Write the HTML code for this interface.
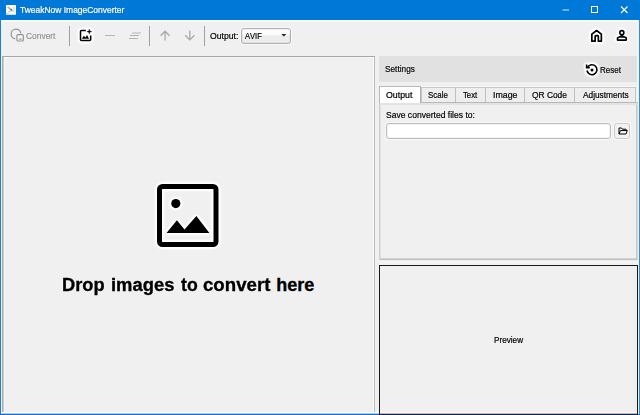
<!DOCTYPE html>
<html><head><meta charset="utf-8">
<style>
html,body{margin:0;padding:0;}
body{width:640px;height:415px;overflow:hidden;background:#f0f0f0;position:relative;font-family:"Liberation Sans",sans-serif;font-size:9px;color:#000;}
.a{position:absolute;}
.t{position:absolute;white-space:nowrap;line-height:12px;transform-origin:0 0;-webkit-text-stroke:0.22px currentColor;text-shadow:0 0 1px rgba(255,255,255,0.900),0 0 1px rgba(255,255,255,0.700);}
.h{filter:drop-shadow(0 0 0.8px #fff) drop-shadow(0 0 0.8px #fff) drop-shadow(0 0 0.8px #fff) drop-shadow(0 0 0.6px #fff);}
.sep{position:absolute;width:1px;background:#a0a0a0;top:26px;height:20px;}
</style></head><body>
<div class="a" style="left:0;top:0;width:640px;height:20px;background:#0078d7;"></div>
<div class="a" style="left:1px;top:20px;width:638px;height:1px;background:#fffdf5;"></div>
<div class="a" style="left:1px;top:21px;width:638px;height:1px;background:#f8f7f2;"></div>
<div class="a" style="left:0;top:20px;width:1px;height:395px;background:#1a80d9;"></div>
<div class="a" style="left:637px;top:22px;width:1px;height:391px;background:#f7f6f2;"></div>
<div class="a" style="left:638px;top:20px;width:1px;height:394px;background:#f1f1e8;"></div>
<div class="a" style="left:639px;top:20px;width:1px;height:395px;background:#2f8ee0;"></div>
<div class="a" style="left:1px;top:412px;width:637px;height:1px;background:#fffdf5;"></div>
<div class="a" style="left:1px;top:413px;width:637px;height:1px;background:#a9cdee;"></div>
<div class="a" style="left:0;top:414px;width:640px;height:1px;background:#0f6fc8;"></div>

<!-- title icon -->
<svg class="a" style="left:5px;top:4px" width="12" height="12" viewBox="0 0 12 12">
<defs><filter id="b1" x="-50%" y="-50%" width="200%" height="200%"><feGaussianBlur stdDeviation="0.600"/></filter></defs>
<rect x="1" y="1" width="10" height="9.600" fill="#fdfdfd"/>
<rect x="1" y="10" width="10" height="0.600" fill="#d8eaf8"/>
<g filter="url(#b1)">
<rect x="7.800" y="2.600" width="2.600" height="6" fill="#e6e6e6"/>
<path d="M2.800 2.800 L7.500 7.200" stroke="#b4b4b4" stroke-width="1.600" fill="none"/>
<path d="M5.600 5 L7 6.200" stroke="#707070" stroke-width="1.400" fill="none"/>
<path d="M3.400 8 L5.400 7.300" stroke="#a0a0a0" stroke-width="1" fill="none"/>
<rect x="1.200" y="1.100" width="1.600" height="0.900" fill="#ffd980"/>
<rect x="8.600" y="1.100" width="1.800" height="0.900" fill="#ffe090"/>
<rect x="1.400" y="9" width="2.200" height="0.800" fill="#f7b040"/>
</g>
</svg>
<div class="t" style="left:19.99px;top:4px;font-size:9.5px;color:#fff;font-weight:normal;line-height:12px;transform:scaleX(0.8906);text-shadow:0 0 1px rgba(0,80,170,0.600);">TweakNow ImageConverter</div>
<!-- window controls -->
<svg class="a" style="left:555px;top:0" width="85" height="20" viewBox="0 0 85 20">
<path d="M7.500 10 H14" stroke="#fff" stroke-width="1" stroke-opacity="0.850" fill="none"/>
<rect x="36.500" y="6.500" width="6" height="6" stroke="#fff" stroke-width="1" fill="none"/>
<path d="M66 6.500 L72.500 13 M72.500 6.500 L66 13" stroke="#fff" stroke-width="1.100" fill="none"/>
</svg>

<!-- toolbar -->
<svg class="a" style="left:9px;top:27.400px;filter:drop-shadow(0 0 0.6px #fff) drop-shadow(0 0 0.5px #fff);" width="18" height="18" viewBox="0 0 18 18" fill="none" stroke="#8e8e8e" stroke-width="1.200">
<path d="M6.300 11.850 A4.900 4.900 0 1 1 11.850 6.300"/>
<rect x="7.900" y="7.700" width="6.400" height="6.300" rx="1" fill="#f8f8f8"/>
<path d="M9.800 12.300 H12.600 M11.200 11.500 L11.800 11 L12.200 11.500" stroke-width="0.800"/>
</svg>
<div class="t" style="left:26.15px;top:30px;font-size:9px;color:#909090;font-weight:normal;line-height:12px;transform:scaleX(0.9349);">Convert</div>
<div class="sep" style="left:69px"></div>
<svg class="a h" style="left:78px;top:28px" width="16" height="16" viewBox="0 0 16 16" fill="none" stroke="#000" stroke-width="1.500">
<rect x="2.500" y="2.500" width="10.200" height="10.100" rx="1.300" fill="#fff" stroke="none"/>
<path d="M7.900 2.550 H3.500 Q2.500 2.550 2.500 3.550 V11.600 Q2.500 12.600 3.500 12.600 H11.700 Q12.700 12.600 12.700 11.600 V7.500"/>
<path d="M3.800 10.800 L5.900 7.700 L7.400 9.400 L9 7.100 L11.100 10.800 Z" fill="#000" stroke="none"/>
<path d="M11.300 1 L11.900 3 L13.900 3.600 L11.900 4.200 L11.300 6.200 L10.700 4.200 L8.700 3.600 L10.700 3 Z" fill="#000" stroke="#000" stroke-width="0.300"/>
</svg>
<div class="a" style="left:105px;top:35px;width:10px;height:1px;background:#b4b4b4;"></div>
<div class="a" style="left:132px;top:32px;width:9px;height:1px;background:#b4b4b4;transform:translateY(0.500px);"></div>
<div class="a" style="left:130px;top:35px;width:9px;height:1px;background:#b0b0b0;"></div>
<div class="a" style="left:129px;top:38px;width:9px;height:1px;background:#b4b4b4;"></div>
<div class="sep" style="left:149px"></div>
<svg class="a" style="left:158px;top:28px" width="40" height="16" viewBox="0 0 40 16" fill="none" stroke="#a8a8a8" stroke-width="1.250">
<path d="M7.100 12.600 V3 M2.600 7.800 L7.100 3.200 L11.600 7.800"/>
<path d="M31.800 2.500 V12 M27.200 7.300 L31.800 11.900 L36.400 7.300"/>
</svg>
<div class="sep" style="left:204px"></div>
<div class="t" style="left:209.84px;top:30px;font-size:9px;color:#000;font-weight:normal;line-height:12px;transform:scaleX(0.9579);">Output:</div>
<div class="a" style="left:241px;top:28px;width:48px;height:14px;background:linear-gradient(#fefefe 0%,#fbfbfb 38%,#ececec 52%,#ededed 100%);border:1px solid #b2b2b2;border-radius:3px;box-shadow:inset 0 0 0 1px rgba(0,0,0,0.050),0 0 0 1px rgba(255,255,255,0.500);"></div>
<div class="t" style="left:245.11px;top:30px;font-size:9px;color:#000;font-weight:normal;line-height:12px;transform:scaleX(0.8403);font-kerning:none;">AVIF</div>
<svg class="a" style="left:279.600px;top:33.300px" width="8" height="5" viewBox="0 0 8 5"><path d="M1.300 1 H6.300 L3.800 3.600 Z" fill="#222"/></svg>

<!-- home & person -->
<svg class="a h" style="left:589px;top:28px" width="16" height="16" viewBox="0 0 16 16" fill="#fff" stroke="#000" stroke-width="1.700" stroke-linejoin="miter">
<path d="M7.600 2.500 L12.350 6.200 V13.150 H9.350 V8.400 Q9.350 7.650 8.600 7.650 H6.900 Q6.150 7.650 6.150 8.400 V13.150 H2.850 V6.200 Z" stroke-linejoin="round"/>
</svg>
<svg class="a h" style="left:614px;top:28px" width="16" height="16" viewBox="0 0 16 16" fill="#fff" stroke="#000" stroke-width="1.600" stroke-linejoin="round">
<circle cx="7.850" cy="4.650" r="2"/>
<rect x="6.600" y="7" width="2.600" height="2" fill="#000" stroke="none"/>
<path d="M3.500 12.100 V10 L5.500 8.900 H10.300 L12.300 10 V12.100 Z"/>
</svg>

<!-- left panel -->
<div class="a" style="left:2px;top:56px;width:373px;height:356px;border-top:1px solid #a6a6a6;border-left:1px solid #b0b0b0;border-right:1px solid #b8b8b8;box-sizing:border-box;"></div>
<div class="a" style="left:3px;top:57px;width:1px;height:355px;background:#c8c8c8;"></div>
<div class="a" style="left:4px;top:57px;width:1px;height:355px;background:#f8f8f8;"></div>
<div class="a" style="left:5px;top:57px;width:368px;height:1px;background:#f7f7f7;"></div>
<div class="a" style="left:373px;top:57px;width:1px;height:355px;background:#fcfcfc;"></div>
<svg class="a h" style="left:150px;top:178px" width="76" height="76" viewBox="0 0 76 76">
<rect x="9.500" y="8.500" width="56.500" height="58" rx="3" fill="none" stroke="#000" stroke-width="5"/>
<circle cx="25.800" cy="25.600" r="4.600" fill="#000"/>
<path d="M16.500 54.900 L26.900 42.300 L34.500 51.600 L46.400 38 L59.400 54.900 Z" fill="#000"/>
</svg>
<div class="t" style="left:61.69px;top:273px;font-size:18px;color:#000;font-weight:bold;line-height:24px;transform:scaleX(1.013);-webkit-text-stroke:0.350px #000;text-shadow:0 0 1px #fff,0 0 1.500px #fff;">Drop</div><div class="t" style="left:110.75px;top:273px;font-size:18px;color:#000;font-weight:bold;line-height:24px;transform:scaleX(1.0219);-webkit-text-stroke:0.350px #000;text-shadow:0 0 1px #fff,0 0 1.500px #fff;">images</div><div class="t" style="left:181.3px;top:273px;font-size:18px;color:#000;font-weight:bold;line-height:24px;transform:scaleX(0.9818);-webkit-text-stroke:0.350px #000;text-shadow:0 0 1px #fff,0 0 1.500px #fff;">to</div><div class="t" style="left:203.48px;top:273px;font-size:18px;color:#000;font-weight:bold;line-height:24px;transform:scaleX(1.0357);-webkit-text-stroke:0.350px #000;text-shadow:0 0 1px #fff,0 0 1.500px #fff;">convert</div><div class="t" style="left:276.27px;top:273px;font-size:18px;color:#000;font-weight:bold;line-height:24px;transform:scaleX(1.0);-webkit-text-stroke:0.350px #000;text-shadow:0 0 1px #fff,0 0 1.500px #fff;">here</div>

<!-- settings header -->
<div class="a" style="left:379px;top:56px;width:258px;height:26px;background:#e1e1e1;"></div>
<div class="t" style="left:384.76px;top:63px;font-size:9px;color:#000;font-weight:normal;line-height:12px;transform:scaleX(0.9192);">Settings</div>
<svg class="a h" style="left:585px;top:62.700px" width="14" height="14" viewBox="0 0 14 14" fill="none" stroke="#000" stroke-width="1.600">
<path d="M2.600 4.200 A5 5 0 1 1 2 7.500"/>
<path d="M1.600 1.600 V4.800 H4.800" />
<circle cx="7" cy="7" r="1.500" fill="#000" stroke="none"/>
</svg>
<div class="t" style="left:600.45px;top:63.5px;font-size:9px;color:#000;font-weight:normal;line-height:12px;transform:scaleX(0.8874);">Reset</div>

<!-- tabs -->
<div class="a" style="left:379px;top:102px;width:259px;height:158px;border:1px solid #d0d0d0;border-top-color:#b8b8b8;border-bottom-color:#bebebe;border-right-color:#d8d8d8;box-sizing:border-box;"></div>
<div class="a" style="left:380px;top:103px;width:257px;height:2px;background:#e3e3e3;"></div>
<div class="a" style="left:380px;top:105px;width:1px;height:154px;background:#dedede;"></div>
<div class="a" style="left:636px;top:105px;width:1px;height:154px;background:#c8c8c8;"></div>
<div class="a" style="left:381px;top:258px;width:255px;height:1px;background:#d6d6d6;"></div>
<div class="a" style="left:379px;top:262px;width:258px;height:1px;background:#f7f7f7;"></div>
<div class="a" style="left:421px;top:86px;width:215px;height:1px;background:#f8f8f8;"></div>
<div class="a" style="left:421px;top:87px;width:215px;height:15px;background:#eeeeee;border:1px solid #c6c6c6;border-bottom:none;box-sizing:border-box;"></div>
<div class="a" style="left:455px;top:88px;width:1px;height:14px;background:#c0c0c0;"></div>
<div class="a" style="left:485px;top:88px;width:1px;height:14px;background:#c0c0c0;"></div>
<div class="a" style="left:524px;top:88px;width:1px;height:14px;background:#c0c0c0;"></div>
<div class="a" style="left:574px;top:88px;width:1px;height:14px;background:#c0c0c0;"></div>
<div class="a" style="left:379px;top:86px;width:42px;height:17px;background:#fff;border:1px solid #b8b8b8;border-right-color:#b0b0b0;border-bottom:none;box-sizing:border-box;"></div>
<div class="t" style="left:386.23px;top:89.3px;font-size:9px;color:#000;font-weight:normal;line-height:12px;transform:scaleX(0.9757);">Output</div><div class="t" style="left:427.97px;top:89.3px;font-size:9px;color:#000;font-weight:normal;line-height:12px;transform:scaleX(0.8823);">Scale</div><div class="t" style="left:463.19px;top:89.3px;font-size:9px;color:#000;font-weight:normal;line-height:12px;transform:scaleX(0.8611);">Text</div><div class="t" style="left:492.57px;top:89.3px;font-size:9px;color:#000;font-weight:normal;line-height:12px;transform:scaleX(0.9792);">Image</div><div class="t" style="left:531.85px;top:89.3px;font-size:9px;color:#000;font-weight:normal;line-height:12px;transform:scaleX(0.9302);">QR Code</div><div class="t" style="left:583.02px;top:89.3px;font-size:9px;color:#000;font-weight:normal;line-height:12px;transform:scaleX(0.9215);">Adjustments</div>
<div class="t" style="left:386.24px;top:109.3px;font-size:9px;color:#000;font-weight:normal;line-height:12px;transform:scaleX(0.9503);">Save converted files to:</div>
<div class="a" style="left:386px;top:123px;width:225px;height:16px;background:#fff;border:1px solid #bdbdbd;border-radius:3px;box-sizing:border-box;box-shadow:inset 0 0 0 1px rgba(0,0,0,0.050),0 0 0 1px rgba(255,255,255,0.550);"></div>
<div class="a" style="left:614px;top:123px;width:16px;height:16px;background:#f2f2f2;border:1px solid #cbcbcb;border-radius:3px;box-sizing:border-box;box-shadow:0 0 0 1px rgba(255,255,255,0.500);"></div>
<svg class="a" style="left:618px;top:127.300px" width="10" height="8" viewBox="0 0 10 8" fill="none" stroke="#000" stroke-width="1" stroke-linejoin="round">
<path d="M1 7 V1 H3.500 L4.500 2.200 H8 V3.500 M1 7 L2.500 3.500 H9.300 L8 7 Z"/>
</svg>

<!-- preview -->
<div class="a" style="left:379px;top:265px;width:259px;height:150px;border:1px solid #181818;border-bottom:none;box-sizing:border-box;"></div>
<div class="a" style="left:380px;top:412px;width:257px;height:1px;background:#f8f8f8;"></div>
<div class="a" style="left:380px;top:413px;width:257px;height:1px;background:#cdb59c;"></div>
<div class="a" style="left:380px;top:414px;width:257px;height:1px;background:#0a2466;"></div>
<div class="t" style="left:494.23px;top:333.5px;font-size:9px;color:#000;font-weight:normal;line-height:12px;transform:scaleX(0.9079);text-shadow:0 0 1px #fff,0 0 1px #fff;">Preview</div>
</body></html>
